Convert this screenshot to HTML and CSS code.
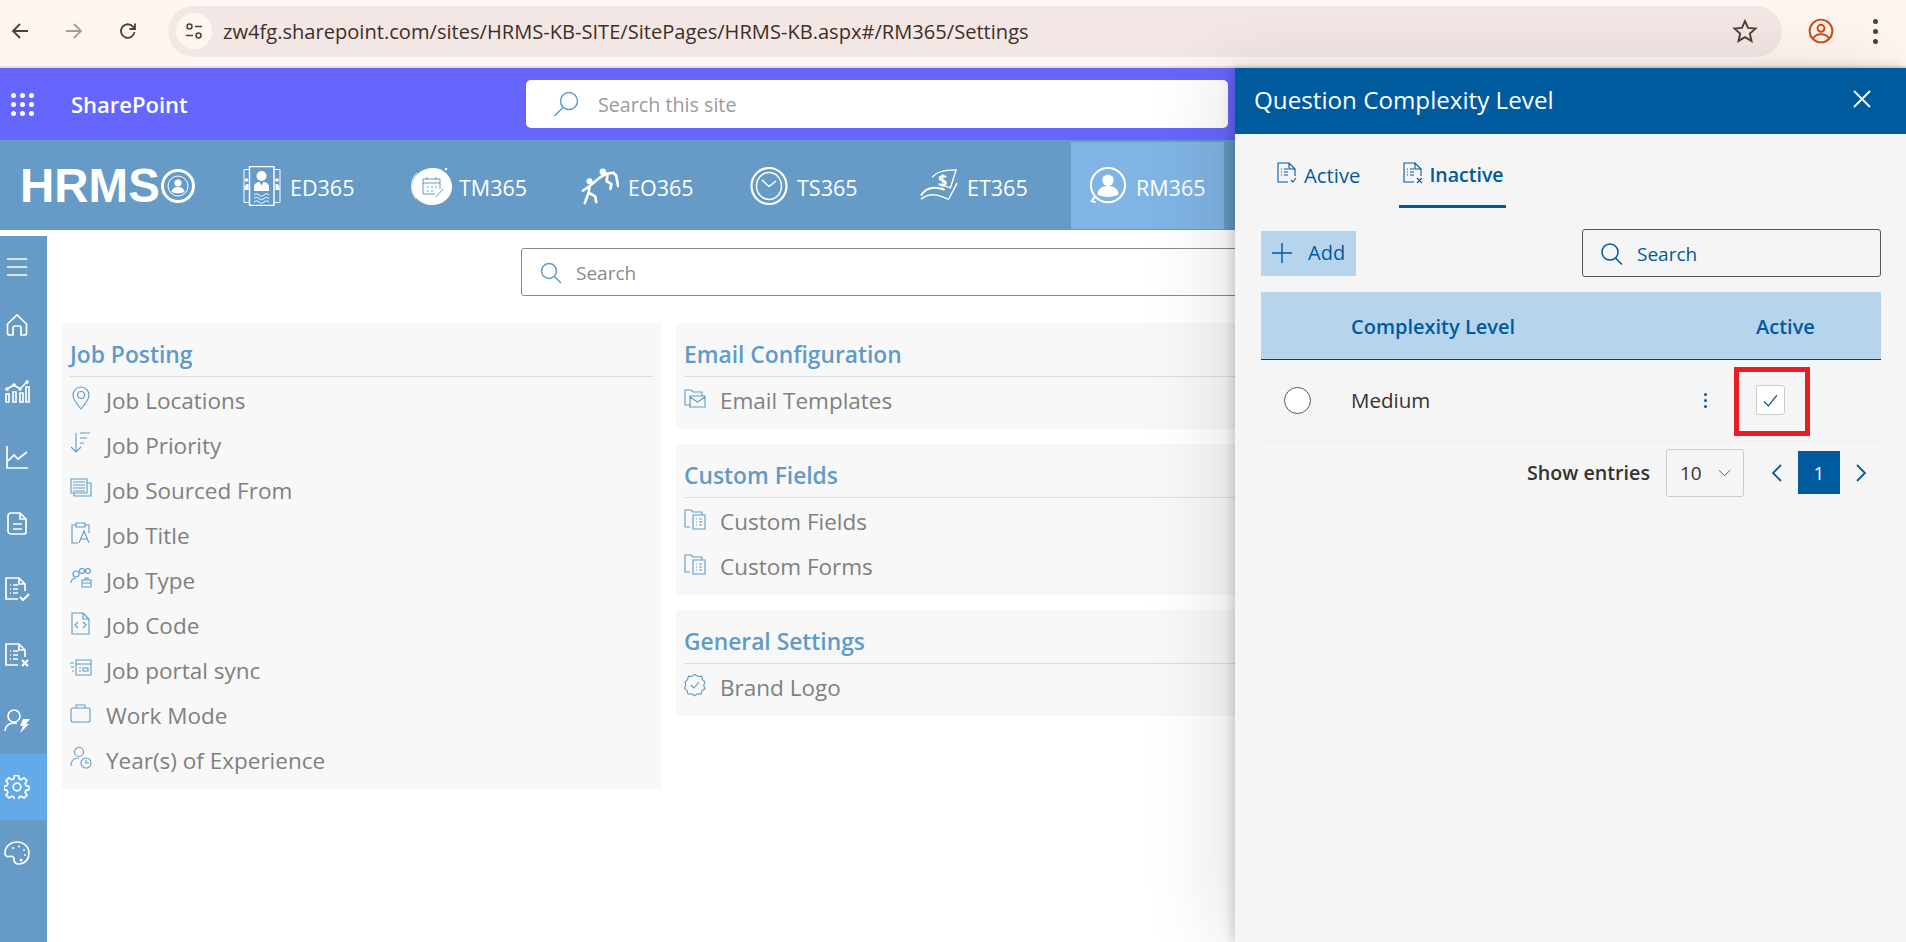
FILE: index.html
```html
<!DOCTYPE html>
<html lang="en">
<head>
	<meta charset="UTF-8">
	<title>HRMS - Settings</title>
	<link rel="stylesheet" href="styles.css">
</head>
<body>
	<!-- browser toolbar -->
	<div class="chrome">
		<svg class="chrome_btn" viewBox="0 0 20 20"><path d="M18 10H3M10 3l-7 7 7 7"/></svg>
		<svg class="chrome_btn off" viewBox="0 0 20 20"><path d="M2 10h15M10 3l7 7-7 7"/></svg>
		<svg class="chrome_btn" viewBox="0 0 20 20"><path d="M16.500 11a6.800 6.800 0 1 1-1.600-5.400L17 8M17 2.500V8h-5.500"/></svg>
		<div class="url_pill">
			<span class="site_info">
				<svg viewBox="0 0 20 20"><circle cx="5.500" cy="5.500" r="2.500"/><path d="M11 5.500h7M2 14.500h7"/><circle cx="14.500" cy="14.500" r="2.500"/></svg>
			</span>
			<span class="url">zw4fg.sharepoint.com/sites/HRMS-KB-SITE/SitePages/HRMS-KB.aspx#/RM365/Settings</span>
			<svg class="star" viewBox="0 0 24 24"><path d="M12 2.800l2.800 6.300 6.900.7-5.200 4.600 1.500 6.800-6-3.500-6 3.500 1.500-6.800-5.200-4.600 6.900-.7z"/></svg>
		</div>
		<svg class="profile" viewBox="0 0 24 24"><circle cx="12" cy="12" r="10.500"/><circle cx="12" cy="9.500" r="3.200"/><path d="M5 18.500c1.500-2.500 4-3.500 7-3.500s5.500 1 7 3.500"/></svg>
		<div class="chrome_menu"><i></i><i></i><i></i></div>
	</div>

	<!-- sharepoint suite bar -->
	<div class="sp_bar">
		<div class="waffle"><i></i><i></i><i></i><i></i><i></i><i></i><i></i><i></i><i></i></div>
		<span class="sp_name">SharePoint</span>
		<div class="sp_search">
			<svg viewBox="0 0 26 26"><circle cx="16" cy="10" r="8.500"/><path d="M10 16.500L1.500 25"/></svg>
			<span>Search this site</span>
		</div>
	</div>

	<!-- hrms modules -->
	<div class="hrms_bar">
		<div class="logo">
			<span>HRMS</span>
			<svg viewBox="0 0 36 36"><circle cx="18" cy="18" r="15.500" class="logo_ring"/><circle cx="18" cy="18" r="10" class="logo_ring thin"/><circle cx="18" cy="15" r="3.600" class="fill"/><path class="fill" d="M11.500 24c.6-3.500 3-5 6.500-5s5.900 1.500 6.500 5c-3.500 1.700-9.500 1.700-13 0z"/></svg>
		</div>
		<div class="modules">
			<div class="module">
				<svg viewBox="0 0 38 40"><path class="thin" d="M6.500 3.500H1v33h5.500M31 3.500h6v33h-6"/><circle cx="3.500" cy="14" r="1.800" class="fill"/><circle cx="34" cy="14" r="1.800" class="fill"/><path class="fill" d="M1.500 24c0-5 1-6 4-6v6zM36.500 24c0-5-1-6-4-6v6z"/><rect x="6.500" y=".5" width="24.500" height="39" rx="1"/><circle cx="18.500" cy="10" r="5" class="fill"/><path class="fill" d="M11 25v-4c0-3.500 3-5 5.500-5l2 3.500 2-3.500c2.500 0 5.500 1.500 5.500 5v4z"/><path d="M11 29c2-1.500 3-1.500 5 0s3 1.500 5 0 3-1.500 5 0M11 32.500c2-1.500 3-1.500 5 0s3 1.500 5 0 3-1.500 5 0M11 36c2-1.500 3-1.500 5 0s3 1.500 5 0 3-1.500 5 0" class="thin"/></svg>
				<span>ED365</span>
			</div>
			<div class="module">
				<svg class="blob" viewBox="0 0 44 40"><path class="thin" d="M7 33C1 26 1 13 8 7"/><path class="fill" d="M22 2c11-1 20 7 21 17s-7 20-20 20C12 39 3 31 3 21S11 3 22 2z"/><circle cx="37" cy="3" r="1.200" class="fill"/><g class="blue thin"><path d="M14 13h17v10M14 13v15h12M14 17h17M18 21h2M22 21h2M26 21h2M18 25h2M22 25h2M18 11v3M27 11v3"/><path d="M27 31l7-8"/></g></svg>
				<span>TM365</span>
			</div>
			<div class="module">
				<svg viewBox="0 0 40 40"><circle cx="9" cy="15" r="3.200" class="fill"/><circle cx="23" cy="5" r="3.400" class="fill"/><path class="limb" d="M9 20l-1 7-4 11M8 27l7 4 1 6M9 20L20 11M9 20l-7 5M20 11l7-4 7-1M28 7l-1 8 5 3-1 5M34 6l3 3 2 11"/></svg>
				<span>EO365</span>
			</div>
			<div class="module">
				<svg viewBox="0 0 38 40"><ellipse cx="19" cy="20" rx="17.500" ry="18" class="wide"/><ellipse cx="19" cy="20" rx="12.500" ry="13.500"/><path d="M12 14l7 6.500 7-5.500"/></svg>
				<span>TS365</span>
			</div>
			<div class="module">
				<svg viewBox="0 0 40 40"><path d="M13 11C17 5 26 3 38 3l-6 19-8-3"/><path class="wide" d="M1 30c5-8 14-10 25-6"/><path d="M1 34c6-5 15-6 24-2l5 2 9-17"/><text x="19" y="20" class="dollar">$</text></svg>
				<span>ET365</span>
			</div>
			<div class="module current">
				<svg viewBox="0 0 40 40"><circle cx="20" cy="19" r="18" class="wide"/><path class="wide" d="M6 31l-3 5 4 1"/><circle cx="20" cy="14" r="6" class="fill"/><path class="fill" d="M9 29c0-6 5-9 11-9s11 3 11 9c-5 3.500-17 3.500-22 0z"/></svg>
				<span>RM365</span>
			</div>
		</div>
	</div>

	<div class="layout">
		<ul class="side_nav">
			<li class="first"><svg viewBox="0 0 24 24"><path d="M2 4h20M2 12h20M2 20h20"/></svg></li>
			<li><svg viewBox="0 0 24 24"><path d="M2.500 11L12 2l9.500 9v9a2 2 0 0 1-2 2h-3.500v-7a2 2 0 0 0-2-2h-4a2 2 0 0 0-2 2v7H4.500a2 2 0 0 1-2-2z"/></svg></li>
			<li><svg viewBox="0 0 26 24"><path d="M2 15h3v8H2zM9 13h3v10H9zM16 14h3v9h-3zM22 8h3v15h-3zM3 10l7-4 6 4 7-7"/><circle cx="3" cy="10" r="1"/><circle cx="10" cy="6" r="1"/><circle cx="16" cy="10" r="1"/><circle cx="23" cy="3" r="1"/></svg></li>
			<li><svg viewBox="0 0 24 24"><path d="M2 1v22h21M3 16l6-6 4 4 9-7"/></svg></li>
			<li><svg viewBox="0 0 24 24"><path d="M3 5a3 3 0 0 1 3-3h9l6 6v13a2 2 0 0 1-2 2H6a3 3 0 0 1-3-3zM15 2v6h6M8 13h9M8 18h9"/></svg></li>
			<li><svg viewBox="0 0 26 24"><path d="M14 22H2V1h13l6 6v7M15 1v6h6"/><path d="M6 8h1M9 8h5M6 12h1M9 12h5M6 16h1M9 16h5"/><path class="wide" d="M16 20l3 3 6-6"/></svg></li>
			<li><svg viewBox="0 0 26 24"><path d="M14 22H2V1h13l6 6v7M15 1v6h6"/><path d="M6 8h1M9 8h5M6 12h1M9 12h5M6 16h1M9 16h5"/><path class="wide" d="M18 17l6 6M24 17l-6 6"/></svg></li>
			<li><svg viewBox="0 0 26 24"><circle cx="10" cy="7" r="6"/><path d="M1 22c0-5 4-8 9-8 1 0 2 .2 3 .5"/><path class="fill" d="M19 10h7l-4 5h3l-9 9 3-7h-3z"/></svg></li>
			<li class="on"><svg viewBox="0 0 24 24"><circle cx="12" cy="12" r="3.800"/><path d="M10 1h4l.7 3.300 2 .9 2.900-1.800 2.800 2.800-1.800 2.900.9 2 3 .7v3.300l-3 .7-.9 2 1.800 2.900-2.800 2.800-2.900-1.800-2 .9-.7 3.300h-4l-.7-3.300-2-.9-2.900 1.800-2.800-2.800 1.800-2.900-.9-2-3-.7v-3.300l3-.7.9-2-1.800-2.900 2.800-2.800 2.900 1.800 2-.9z" transform="translate(-.5 -.5)"/></svg></li>
			<li><svg viewBox="0 0 26 24"><path d="M13 1C6 1 1 6 1 12c0 3 2 4 4 3.500 3-.7 5 0 5 3 0 3 2 4.500 5 4.500 6 0 10-5 10-11S20 1 13 1z"/><circle cx="9" cy="7" r="1" class="fill"/><circle cx="15" cy="5.500" r="1" class="fill"/><circle cx="20" cy="9" r="1" class="fill"/><circle cx="21" cy="14" r="1" class="fill"/><circle cx="17" cy="19" r="1.500" class="fill"/></svg></li>
		</ul>

		<div class="content">
			<div class="main_search">
				<svg viewBox="0 0 22 22"><circle cx="9" cy="9" r="7.500"/><path d="M14.500 14.500L21 21"/></svg>
				<span>Search</span>
			</div>
			<div class="cards">
				<div class="card">
					<h3>Job Posting</h3>
					<ul>
						<li><svg viewBox="0 0 22 24"><path d="M11 23C5 16 3 13 3 9a8 8 0 0 1 16 0c0 4-2 7-8 14z"/><circle cx="11" cy="9" r="3.500"/></svg>Job Locations</li>
						<li><svg viewBox="0 0 22 24"><path d="M6 2v19M1 16l5 5 5-5M10 2h10M10 7h7M10 12h4"/></svg>Job Priority</li>
						<li><svg viewBox="0 0 22 24"><path d="M1 3h16v14H1zM4 17v3h17V7h-4M3 6h12M3 9h12M3 12h12M3 15h12"/></svg>Job Sourced From</li>
						<li><svg viewBox="0 0 22 24"><path d="M8 22H2V4h4M15 4h4v8M6 2h9v4H6zM9 22l5-12 5 12M11 18h6"/></svg>Job Title</li>
						<li><svg viewBox="0 0 22 24"><circle cx="6" cy="8" r="3"/><circle cx="12" cy="5" r="2.500"/><circle cx="18" cy="5" r="2.500"/><path d="M1 17c0-3 2-5 5-5M12 14h9v7h-9zM15 14v-2h3v2M12 17h9"/></svg>Job Type</li>
						<li><svg viewBox="0 0 22 24"><path d="M2 2h11l6 6v15H2zM13 2v6h6M8 11l-3 3 3 3M13 11l3 3-3 3"/></svg>Job Code</li>
						<li><svg viewBox="0 0 22 24"><path d="M6 4h15v15H6zM6 8h15M9 12h2M9 15h2M13 12h5v3h-5zM0 7h4M1 11h3M2 15h2"/></svg>Job portal sync</li>
						<li><svg viewBox="0 0 22 24"><path d="M1 9a2 2 0 0 1 2-2h15a2 2 0 0 1 2 2v10a2 2 0 0 1-2 2H3a2 2 0 0 1-2-2zM6 7V4h9v3"/></svg>Work Mode</li>
						<li><svg viewBox="0 0 22 24"><circle cx="9" cy="6" r="4.500"/><path d="M1 20c0-5 3-8 8-8"/><circle cx="16" cy="17" r="5"/><path d="M16 14v3h3"/></svg>Year(s) of Experience</li>
					</ul>
				</div>
				<div class="card_col">
					<div class="card">
						<h3>Email Configuration</h3>
						<ul>
							<li><svg viewBox="0 0 22 24"><path d="M7 19H1V4h6l2 2h9v4M6 10h15v11H6zM6 11l7.500 5 7.500-5"/></svg>Email Templates</li>
						</ul>
					</div>
					<div class="card">
						<h3>Custom Fields</h3>
						<ul>
							<li><svg viewBox="0 0 22 24"><use href="#folder_doc"/></svg>Custom Fields</li>
							<li><svg viewBox="0 0 22 24"><use href="#folder_doc"/></svg>Custom Forms</li>
						</ul>
					</div>
					<div class="card">
						<h3>General Settings</h3>
						<ul>
							<li><svg viewBox="0 0 22 24"><path d="M11 1.500l3 2 3.500-.3 1 3.400 2.500 2.400-1.300 3.400 1.300 3.400-3 1.900-1 3.400-3.500-.2-3 1.900-3-2-3.500.2-1-3.400-2.500-2.300 1.300-3.400L1 9l2.500-2.400 1-3.400 3.500.3z"/><path d="M7 12l3 3 5-6"/></svg>Brand Logo</li>
						</ul>
					</div>
				</div>
			</div>
		</div>
	</div>

	<!-- slide in panel -->
	<div class="panel">
		<div class="panel_head">
			<span>Question Complexity Level</span>
			<svg viewBox="0 0 18 18"><path d="M1 1l16 16M17 1L1 17"/></svg>
		</div>
		<div class="tabs">
			<div class="tab">
				<svg viewBox="0 0 20 22"><path d="M11 20H1V1h11l6 6v7M12 1v6h6M4 7h1M7 7h4M4 10h1M7 10h4M4 13h1M7 13h4M14 18l2 2 3-4"/></svg>
				Active
			</div>
			<div class="tab selected">
				<svg viewBox="0 0 20 22"><path d="M11 20H1V1h11l6 6v7M12 1v6h6M4 7h1M7 7h4M4 10h1M7 10h4M4 13h1M7 13h4M14 16l5 5M19 16l-5 5"/></svg>
				Inactive
			</div>
		</div>
		<div class="tools">
			<div class="add_btn">
				<svg viewBox="0 0 20 20"><path d="M10 0v20M0 10h20"/></svg>
				Add
			</div>
			<div class="panel_search">
				<svg viewBox="0 0 22 22"><circle cx="9" cy="9" r="8"/><path d="M14.500 15L21 21.500"/></svg>
				Search
			</div>
		</div>
		<table class="grid">
			<thead>
				<tr><th class="col_radio"></th><th class="col_name">Complexity Level</th><th class="col_menu"></th><th class="col_active">Active</th></tr>
			</thead>
			<tbody>
				<tr>
					<td><span class="radio"></span></td>
					<td>Medium</td>
					<td><div class="kebab"><i></i><i></i><i></i></div></td>
					<td>
						<span class="check">
							<svg viewBox="0 0 14 12"><path d="M1 7l4 4 8-10"/></svg>
						</span>
						<span class="highlight"></span>
					</td>
				</tr>
			</tbody>
		</table>
		<div class="pager">
			<span class="pager_label">Show entries</span>
			<div class="page_size">
				10
				<svg viewBox="0 0 14 8"><path d="M1 1l6 6 6-6"/></svg>
			</div>
			<svg class="page_arrow" viewBox="0 0 10 18"><path d="M9 1L1 9l8 8"/></svg>
			<span class="page_num">1</span>
			<svg class="page_arrow" viewBox="0 0 10 18"><path d="M1 1l8 8-8 8"/></svg>
		</div>
	</div>

	<svg class="sprite" width="0" height="0">
		<symbol id="folder_doc" viewBox="0 0 22 24"><path d="M6 20H1V3h6l2 2h9v3M9 8h12v14H9zM12 12h1M15 12h3M12 15h1M15 15h3M12 18h1M15 18h3"/></symbol>
	</svg>
</body>
</html>
```

FILE: styles.css
```css
*{margin: 0;padding: 0;box-sizing: border-box;}
li{list-style-type: none;}
html,body{height: 100%;overflow: hidden;}
body{position: relative;background: #fff;font-family: "Open Sans","Noto Sans",sans-serif;color: #333;}
svg{display: block;flex: none;fill: none;stroke: currentColor;stroke-width: 1.5;}
svg .fill{fill: currentColor;stroke: none;}
svg .wide{stroke-width: 2.2;}
svg .thin{stroke-width: 1;}
svg .limb{stroke-width: 2.800;stroke-linecap: round;stroke-linejoin: round;}
.sprite{position: absolute;}

/* browser toolbar */
.chrome{display: flex;align-items: center;height: 68px;padding: 0 0 4px 10px;background: #fff6f2;border-bottom: 2px solid #e4dedb;}
.chrome_btn{width: 20px;height: 20px;margin-right: 34px;color: #4f3f37;stroke-width: 1.8;}
.chrome_btn.off{color: #a89d98;}
.url_pill{display: flex;align-items: center;width: 1614px;height: 51px;margin-left: -4px;padding: 0 24px 0 8px;background: #f2e7e4;border-radius: 26px;}
.site_info{display: flex;align-items: center;justify-content: center;width: 36px;height: 36px;background: #fff6f2;border-radius: 50%;color: #4f3f37;}
.site_info svg{width: 20px;height: 20px;}
.url{flex: 1;margin-left: 11px;font-size: 20.100px;color: #3d2f29;white-space: nowrap;}
.star{width: 26px;height: 26px;color: #4f3f37;stroke-width: 1.800;}
.profile{width: 26px;height: 26px;margin-left: 26px;color: #d24a0c;stroke-width: 1.800;}
.chrome_menu{display: flex;flex-direction: column;gap: 5px;margin-left: 39px;}
.chrome_menu i{display: block;width: 5px;height: 5px;background: #4f3f37;border-radius: 50%;}

/* suite bar */
.sp_bar{display: flex;align-items: center;height: 72px;padding-left: 11px;background: #6666ff;}
.waffle{display: grid;grid-template-columns: repeat(3,5px);gap: 4px;width: 23px;}
.waffle i{display: block;width: 5px;height: 5px;background: #fff;border-radius: 50%;}
.sp_name{width: 455px;margin-left: 37px;font-size: 22px;font-weight: 600;color: #fff;}
.sp_search{display: flex;align-items: center;width: 702px;height: 48px;padding-left: 27px;background: #fff;border-radius: 5px;font-size: 19.700px;color: #9a9a9a;}
.sp_search svg{width: 26px;height: 26px;margin-right: 19px;color: #5f9bd0;}

/* modules */
.hrms_bar{display: flex;height: 90px;padding: 2px 0 1px 20px;background: #659bc6;color: #fff;}
.logo{display: flex;align-items: center;width: 205px;font-family: "Liberation Sans",sans-serif;font-size: 47.500px;font-weight: 700;}
.logo svg{width: 36px;height: 36px;margin-left: 0;}
.logo_ring{stroke-width: 3;}
.modules{display: grid;grid-template-columns: 166px 172px 169px 170px 169px 153px;}
.module{display: flex;align-items: center;padding-left: 18px;font-size: 21.500px;}
.module svg{width: 38px;height: 40px;margin-right: 9px;}
.module svg.blob{width: 44px;margin-right: 6px;}
.module span{margin-top: 3px;}
.module.current{background: #7fb4e4;}
.blue{color: #659bc6;}
.dollar{font-size: 17px;font-weight: 700;fill: #fff;stroke: none;font-family: "Open Sans",sans-serif;}

/* side nav + content */
.layout{display: flex;height: 706px;margin-top: 6px;}
.side_nav{width: 47px;background: #659bc6;color: #fff;}
.side_nav li{display: flex;align-items: center;height: 66px;padding-left: 4px;}
.side_nav li.first{height: 56px;padding-top: 5px;}
.side_nav li.on{background: #63abe8;}
.side_nav svg{width: 26px;height: 24px;stroke-width: 1.700;}
.content{width: 1229px;padding: 12px 0 0 15px;}
.main_search{display: flex;align-items: center;height: 48px;margin-left: 459px;padding: 1px 0 0 18px;border: 1px solid #8a8a8a;border-radius: 3px;font-size: 19px;color: #8a8a8a;}
.main_search svg{width: 22px;height: 22px;margin-right: 14px;color: #5f9bc8;}
.cards{display: grid;grid-template-columns: 599px 600px;gap: 15px;margin-top: 27px;align-items: start;}
.card_col{display: flex;flex-direction: column;gap: 15px;}
.card{padding: 0 8px 7px;background: #f8f8f8;}
.card h3{height: 54px;padding-top: 16px;border-bottom: 1px solid #dcdcdc;font-size: 22.800px;font-weight: 600;line-height: 32px;color: #5f9bc8;white-space: nowrap;}
.card li{display: flex;align-items: center;height: 45px;padding-top: 2px;font-size: 22.500px;color: #808080;}
.card li svg{width: 22px;height: 24px;margin-right: 14px;margin-top: -6px;color: #5f9bc8;stroke-width: 1.1;}

/* panel */
.panel{position: absolute;top: 68px;right: 0;bottom: 0;width: 671px;background: #f5f5f5;box-shadow: -3px 0 10px rgba(0,0,0,.16),-20px 0 70px rgba(0,0,0,.1);}
.panel_head{display: flex;align-items: center;justify-content: space-between;height: 66px;padding: 0 35px 4px 19px;background: #005a9e;font-size: 24.200px;color: #fff;}
.panel_head svg{width: 18px;height: 18px;stroke-width: 1.800;}
.tabs{display: flex;gap: 33px;height: 74px;margin-left: 36px;}
.tab{display: flex;align-items: center;gap: 7px;height: 74px;padding: 8px 6px 0;font-size: 20.300px;color: #005a9e;}
.tab svg{width: 20px;height: 22px;stroke-width: 1.100;margin-top: -4px;}
.tab.selected{gap: 6px;padding: 10px 2px 0 4px;font-size: 19.500px;font-weight: 600;border-bottom: 3px solid #005a9e;}
.tools{display: flex;align-items: center;justify-content: space-between;height: 52px;margin: 19px 25px 0 26px;}
.add_btn{display: flex;align-items: center;gap: 16px;width: 95px;height: 45px;padding: 0 0 2px 11px;background: #b7d4ed;font-size: 20px;color: #005a9e;}
.add_btn svg{width: 20px;height: 20px;margin-top: 2px;stroke-width: 1.400;}
.panel_search{display: flex;align-items: center;gap: 14px;width: 299px;height: 48px;padding: 2px 0 0 18px;border: 1px solid #555;border-radius: 3px;font-size: 19px;color: #005a9e;}
.panel_search svg{width: 22px;height: 24px;}
.grid{width: 620px;margin: 13px 25px 0 26px;border-collapse: collapse;table-layout: fixed;}
.grid th{height: 67px;padding-top: 3px;background: #b7d4ed;border-bottom: 1px solid #333;font-size: 20px;font-weight: 600;text-align: left;color: #005a9e;white-space: nowrap;}
.grid td{height: 82px;border-bottom: 1px solid #ececec;font-size: 20.500px;position: relative;}
.col_radio{width: 90px;}
.col_name{width: 260px;}
.col_menu{width: 145px;}
.radio{display: block;width: 27px;height: 27px;margin-left: 23px;background: #fff;border: 1.500px solid #555;border-radius: 50%;}
.kebab{display: flex;flex-direction: column;gap: 3px;width: 3px;margin-left: 93px;}
.kebab i{display: block;width: 3px;height: 3px;background: #005a9e;border-radius: 50%;}
.check{display: flex;align-items: center;justify-content: center;width: 29px;height: 30px;background: #fff;border: 1px solid #ccc;border-radius: 3px;color: #005a9e;}
.check svg{width: 15px;height: 13px;stroke-width: 1.200;}
.highlight{position: absolute;top: 7px;left: -22px;width: 76px;height: 69px;border: 5px solid #ed1c24;}
.pager{display: flex;align-items: center;justify-content: flex-end;height: 58px;margin: 2px 25px 0 26px;font-size: 19.700px;}
.pager_label{font-weight: 600;color: #333;margin-right: 16px;}
.page_size{display: flex;align-items: center;gap: 16px;width: 78px;height: 48px;padding-left: 13px;border: 1px solid #ccc;border-radius: 3px;font-size: 19px;}
.page_size svg{width: 13px;height: 8px;stroke-width: 1;color: #555;}
.page_arrow{width: 10px;height: 18px;margin: 0 16px 0 28px;color: #005a9e;stroke-width: 1.800;}
.page_arrow:last-child{margin: 0 15px 0 16px;}
.page_num{display: flex;align-items: center;justify-content: center;width: 42px;height: 43px;background: #005a9e;color: #fff;font-size: 19px;}
```
